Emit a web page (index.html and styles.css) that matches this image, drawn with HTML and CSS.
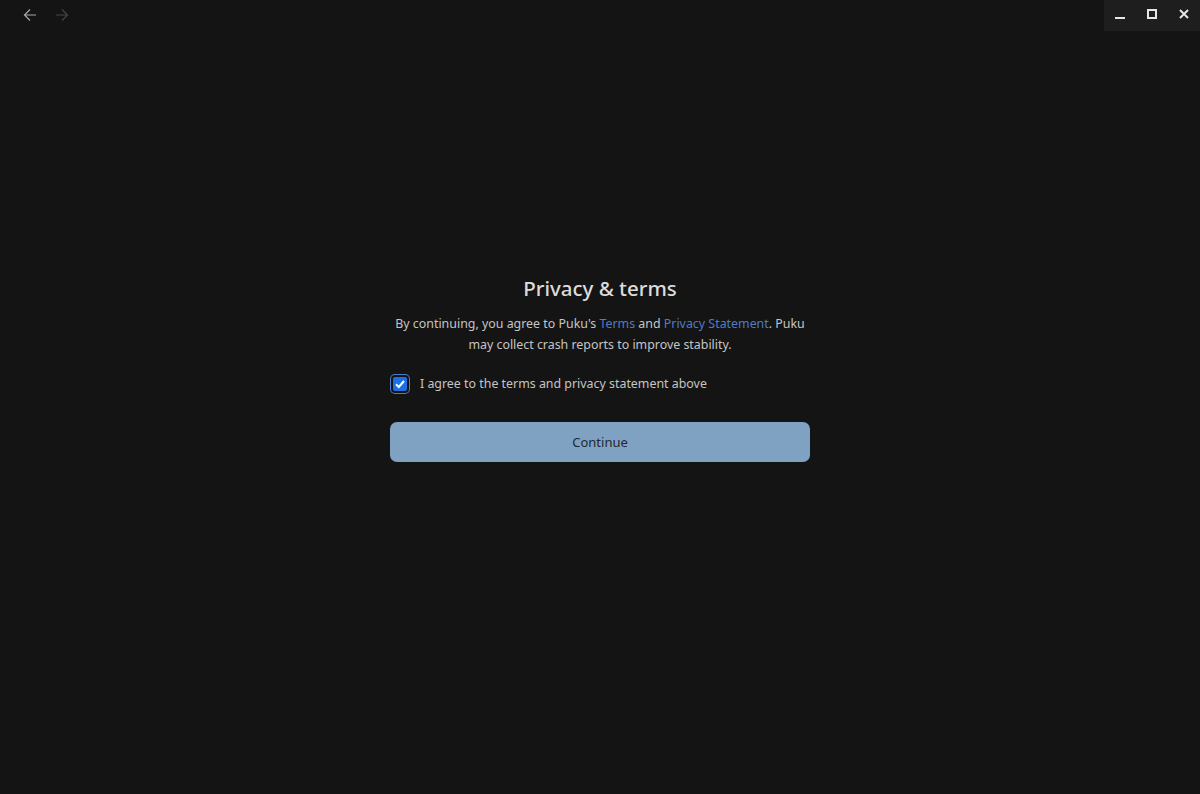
FILE: index.html
```html
<!DOCTYPE html>
<html>
<head>
    <title>Privacy &amp; terms</title>
    <link rel="stylesheet" href="styles.css">
</head>
<body>
    <div class="titlebar">
        <div class="nav">
            <button class="nav-btn" title="Back">
                <svg width="14" height="14" viewBox="0 0 14 14"><path d="M13 7H1.5M7 1.5L1.5 7L7 12.5" fill="none" stroke="currentColor" stroke-width="1.2"/></svg>
            </button>
            <button class="nav-btn disabled" title="Forward">
                <svg width="14" height="14" viewBox="0 0 14 14"><path d="M1 7H12.5M7 1.5L12.5 7L7 12.5" fill="none" stroke="currentColor" stroke-width="1.2"/></svg>
            </button>
        </div>
        <div class="window-controls">
            <button class="win-btn" title="Minimize">
                <svg width="10" height="10" viewBox="0 0 10 10"><rect x="0" y="8" width="10" height="2" fill="currentColor"/></svg>
            </button>
            <button class="win-btn" title="Maximize">
                <svg width="10" height="10" viewBox="0 0 10 10"><rect x="1" y="1" width="8" height="8" fill="none" stroke="currentColor" stroke-width="2"/></svg>
            </button>
            <button class="win-btn" title="Close">
                <svg width="10" height="10" viewBox="0 0 10 10"><path d="M1 1L9 9M9 1L1 9" stroke="currentColor" stroke-width="2"/></svg>
            </button>
        </div>
    </div>

    <main class="consent">
        <h1>Privacy &amp; terms</h1>
        <p class="intro">
            By continuing, you agree to Puku's <a href="#">Terms</a> and <a href="#">Privacy Statement</a>. Puku
            may collect crash reports to improve stability.
        </p>
        <label class="agree">
            <span class="check">
                <svg width="12" height="12" viewBox="0 0 12 12"><path d="M2 6.2L4.8 9L10 3" fill="none" stroke="#fff" stroke-width="2"/></svg>
            </span>
            I agree to the terms and privacy statement above
        </label>
        <button class="continue">Continue</button>
    </main>
</body>
</html>
```

FILE: styles.css
```css
html, body {
    height: 100%;
}
body {
    margin: 0;
    background-color: #141414;
    color: #cfcfcf;
    font-family: "Noto Sans", Arial, sans-serif;
    display: flex;
    flex-direction: column;
}
button {
    font-family: inherit;
    border: none;
    background: none;
    padding: 0;
    cursor: pointer;
}
.titlebar {
    height: 31px;
    display: flex;
    justify-content: space-between;
    align-items: flex-start;
}
.nav {
    display: flex;
    gap: 18px;
    padding: 8px 0 0 23px;
}
.nav-btn {
    width: 14px;
    height: 14px;
    color: #a4a8ad;
    display: flex;
}
.nav-btn.disabled {
    color: #454545;
}
.window-controls {
    display: flex;
    width: 96px;
    height: 31px;
    background-color: #1e1e1e;
}
.win-btn {
    width: 32px;
    height: 31px;
    color: #e6e6e6;
    display: flex;
    align-items: center;
    justify-content: center;
    padding-bottom: 4px;
}
.consent {
    flex: 1;
    display: flex;
    flex-direction: column;
    align-items: center;
    padding-top: 243px;
}
.consent h1 {
    margin: 0;
    font-size: 20.5px;
    font-weight: 500;
    color: #dcdcdc;
    line-height: 28px;
}
.intro {
    width: 420px;
    margin: 11px 0 0;
    text-align: center;
    font-size: 12.4px;
    line-height: 21px;
    color: #c4c4c4;
}
.intro a {
    color: #4f7bc4;
    text-decoration: none;
}
.agree {
    width: 420px;
    margin-top: 20px;
    display: flex;
    align-items: center;
    gap: 13px;
    font-size: 12.4px;
    color: #c4c4c4;
}
.check {
    width: 14px;
    height: 14px;
    border-radius: 2px;
    background-color: #1a6fe6;
    display: flex;
    align-items: center;
    justify-content: center;
    box-shadow: 0 0 0 2px #141414, 0 0 0 3px #4a7ccc;
    margin-left: 3px;
}
.continue {
    margin-top: 30px;
    width: 420px;
    height: 40px;
    border-radius: 7px;
    background-color: #7fa2c2;
    color: #1f2933;
    font-size: 13px;
}
```
